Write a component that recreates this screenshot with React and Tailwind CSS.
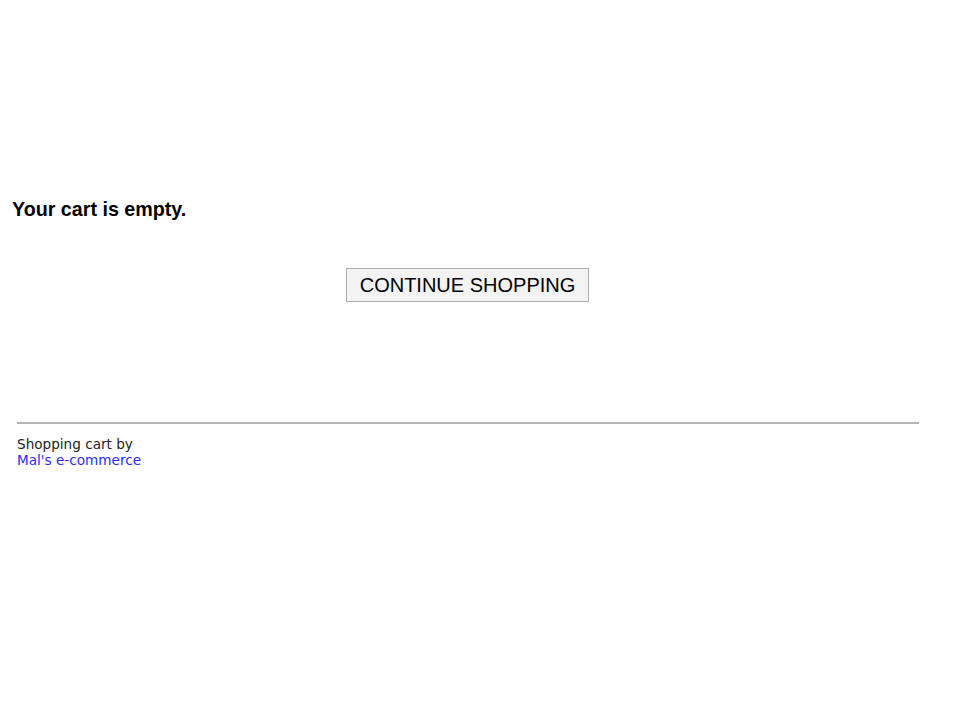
import React from 'react';

const App = () => {
  return (
    <div className="w-[960px] h-[720px] bg-white font-['Liberation_Sans',Arial,sans-serif]">
      <div className="pt-[198px] pl-[12px]">
        <h2 className="text-[19.7px] font-bold leading-[22px] text-black">Your cart is empty.</h2>
      </div>

      <div className="pt-[48px] pl-[346px]">
        <button
          type="button"
          className="h-[34px] w-[243px] border border-[#adadad] bg-[#f3f3f3] text-[20px] leading-none text-black"
        >
          CONTINUE SHOPPING
        </button>
      </div>

      <div className="mt-[120px] mx-[17px] w-[902px] border-t-2 border-[#b4b4b4]" />

      <div className="pl-[17px] pt-[12px] font-['DejaVu_Sans',Verdana,sans-serif] text-[13.6px] leading-[16px]">
        <p className="text-[#222]">Shopping cart by</p>
        <a href="#" className="text-[#2b2bff]">Mal's e-commerce</a>
      </div>
    </div>
  );
};

export default App;
